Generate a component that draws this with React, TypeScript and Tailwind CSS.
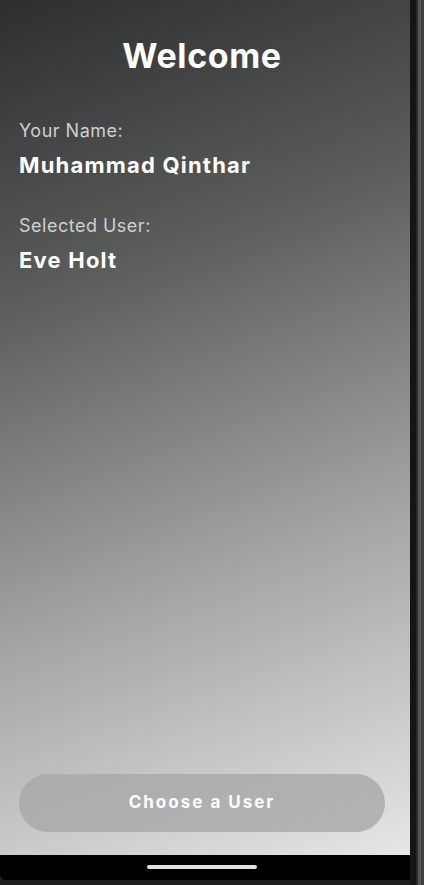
import React from "react";

const font = { fontFamily: "Inter, 'Noto Sans', sans-serif" };

function InfoBlock({ label, value }: { label: string; value: string }) {
  return (
    <div className="flex flex-col gap-[10px]">
      <p className="text-[18px] leading-[22px] text-[#cfcfcf] tracking-[0.5px]">{label}</p>
      <p className="text-[22px] leading-[27px] font-bold text-white tracking-[1.2px]">{value}</p>
    </div>
  );
}

export default function App() {
  return (
    <div className="w-[424px] h-[885px] flex bg-[#1e1e1e] overflow-hidden" style={font}>
      <div className="w-[410px] flex flex-col">
        <main className="h-[855px] flex flex-col px-[19px] pt-[36px] pb-[23px] bg-[linear-gradient(160deg,#2c2e2f_0%,#5a5b5b_30%,#a3a4a4_65%,#e6e6e6_100%)]">
          <h1 className="text-center pr-[6px] text-[34px] leading-[40px] font-bold text-white tracking-[0.6px]">Welcome</h1>
          <div className="mt-[44px] flex flex-col gap-[36px]">
            <InfoBlock label="Your Name:" value="Muhammad Qinthar" />
            <InfoBlock label="Selected User:" value="Eve Holt" />
          </div>
          <button className="mt-auto h-[58px] w-[366px] rounded-full bg-[#a8a8a8]/80 text-white text-[17px] font-bold tracking-[2px]">
            Choose a User
          </button>
        </main>
        <div className="h-[25px] bg-black rounded-bl-[6px] flex justify-center pt-[10px] pr-[6px]">
          <div className="w-[110px] h-[4px] rounded-full bg-[#e2e2e2]" />
        </div>
      </div>
      <div className="w-[6px] bg-[#151515]" />
      <div className="flex-1 flex bg-[#3a3a3a]">
        <div className="w-[2px] bg-[#2a2a2a]" />
        <div className="w-[3px] bg-[#575757]" />
        <div className="flex-1 bg-[#404040]" />
      </div>
    </div>
  );
}
